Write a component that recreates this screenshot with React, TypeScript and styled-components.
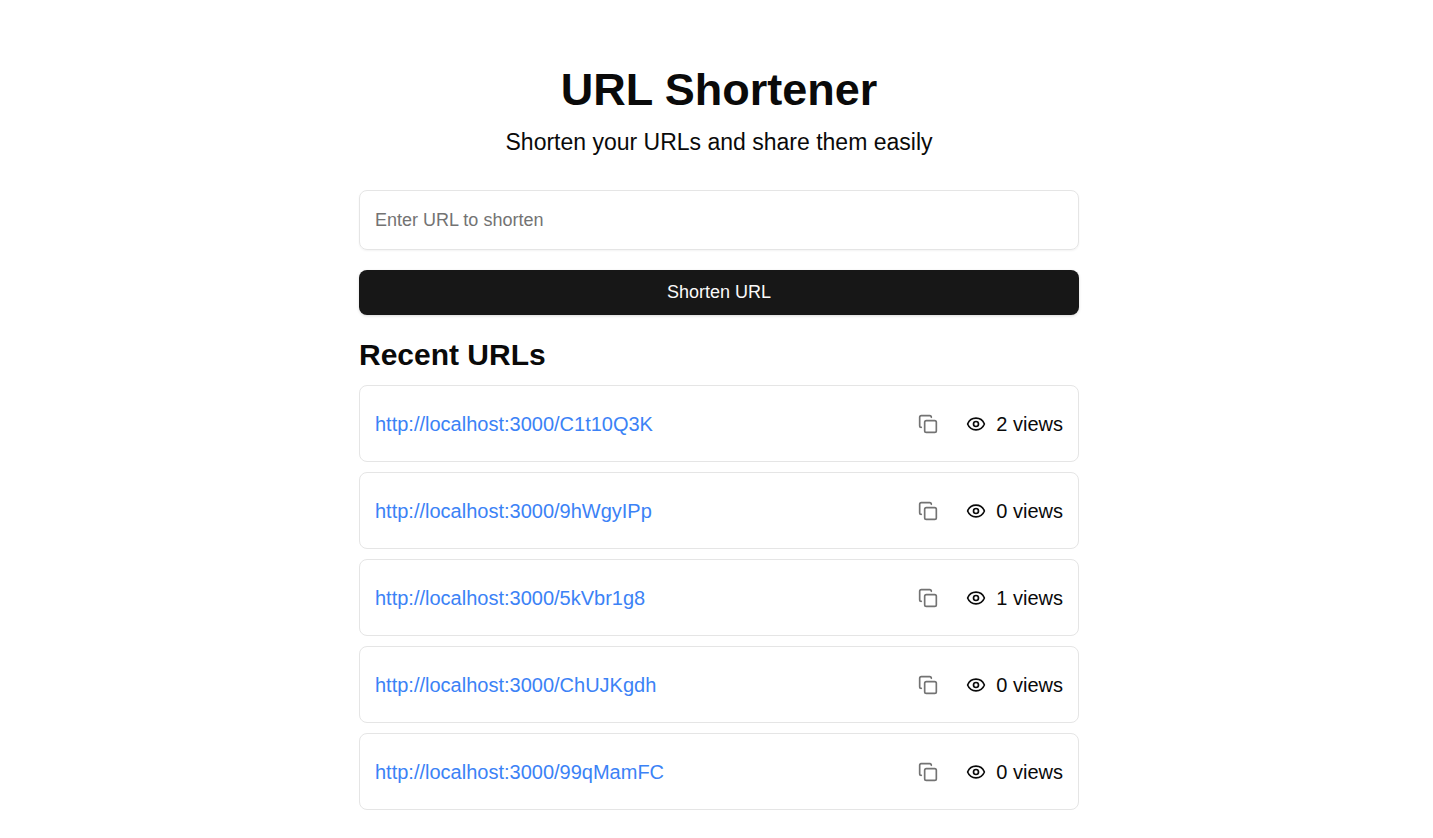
import React, { useState } from "react";
import styled, { createGlobalStyle } from "styled-components";
import { Copy, Eye } from "lucide-react";

const GlobalStyle = createGlobalStyle`
  *, *::before, *::after { box-sizing: border-box; }
  body {
    margin: 0;
    background: #ffffff;
    color: #0a0a0a;
    font-family: Arial, "Liberation Sans", sans-serif;
  }
`;

const Page = styled.main`
  display: flex;
  justify-content: center;
  padding: 65px 15px 28px 20px;
`;

const Column = styled.div`
  display: flex;
  flex-direction: column;
  gap: 20px;
  width: 100%;
  max-width: 720px;
`;

const Header = styled.header`
  display: flex;
  flex-direction: column;
  gap: 10px;
  margin-bottom: 10px;
  text-align: center;
`;

const Title = styled.h1`
  margin: 0;
  font-size: 45px;
  line-height: 50px;
  font-weight: 700;
`;

const Subtitle = styled.p`
  margin: 0;
  font-size: 23px;
  line-height: 35px;
`;

const Form = styled.form`
  display: flex;
  flex-direction: column;
  gap: 20px;
`;

const UrlInput = styled.input`
  width: 100%;
  height: 60px;
  padding: 0 15px;
  border: 1px solid #e5e5e5;
  border-radius: 8px;
  background: transparent;
  color: inherit;
  font-family: inherit;
  font-size: 18px;
  box-shadow: 0 1px 2px rgba(0, 0, 0, 0.05);

  &::placeholder {
    color: #737373;
    opacity: 1;
  }
`;

const SubmitButton = styled.button`
  height: 45px;
  padding: 0 20px;
  border: 0;
  border-radius: 8px;
  background: #171717;
  color: #fafafa;
  font-family: inherit;
  font-size: 18px;
  line-height: 25px;
  box-shadow: 0 1px 3px rgba(0, 0, 0, 0.15);
  cursor: pointer;
`;

const Recent = styled.section`
  display: flex;
  flex-direction: column;
  gap: 10px;
`;

const SectionTitle = styled.h2`
  margin: 0;
  font-size: 30px;
  line-height: 40px;
  font-weight: 600;
`;

const UrlList = styled.ul`
  display: flex;
  flex-direction: column;
  gap: 10px;
  margin: 0;
  padding: 0;
  list-style: none;
`;

const UrlRow = styled.li`
  display: flex;
  align-items: center;
  justify-content: space-between;
  padding: 15px;
  border: 1px solid #e5e5e5;
  border-radius: 8px;
  font-size: 20px;
  line-height: 30px;
`;

const ShortLink = styled.a`
  color: #3b82f6;
  text-decoration: none;
`;

const Actions = styled.div`
  display: flex;
  align-items: center;
  gap: 16px;
`;

const CopyButton = styled.button`
  display: flex;
  align-items: center;
  justify-content: center;
  width: 45px;
  height: 45px;
  padding: 0;
  border: 0;
  border-radius: 8px;
  background: transparent;
  color: #737373;
  cursor: pointer;
`;

const Views = styled.span`
  display: flex;
  align-items: center;
  gap: 10px;
`;

const recentUrls = [
  { code: "C1t10Q3K", views: 2 },
  { code: "9hWgyIPp", views: 0 },
  { code: "5kVbr1g8", views: 1 },
  { code: "ChUJKgdh", views: 0 },
  { code: "99qMamFC", views: 0 },
];

export default function App() {
  const [url, setUrl] = useState("");

  return (
    <>
      <GlobalStyle />
      <Page>
        <Column>
          <Header>
            <Title>URL Shortener</Title>
            <Subtitle>Shorten your URLs and share them easily</Subtitle>
          </Header>
          <Form onSubmit={(e: React.FormEvent) => e.preventDefault()}>
            <UrlInput
              type="url"
              aria-label="URL to shorten"
              placeholder="Enter URL to shorten"
              value={url}
              onChange={(e: React.ChangeEvent<HTMLInputElement>) => setUrl(e.target.value)}
            />
            <SubmitButton type="submit">Shorten URL</SubmitButton>
          </Form>
          <Recent>
            <SectionTitle>Recent URLs</SectionTitle>
            <UrlList>
              {recentUrls.map(({ code, views }) => {
                const link = `http://localhost:3000/${code}`;
                return (
                  <UrlRow key={code}>
                    <ShortLink href={link}>{link}</ShortLink>
                    <Actions>
                      <CopyButton
                        type="button"
                        aria-label="Copy link"
                        onClick={() => navigator.clipboard?.writeText(link)}
                      >
                        <Copy size={20} />
                      </CopyButton>
                      <Views>
                        <Eye size={20} />
                        {`${views} views`}
                      </Views>
                    </Actions>
                  </UrlRow>
                );
              })}
            </UrlList>
          </Recent>
        </Column>
      </Page>
    </>
  );
}
